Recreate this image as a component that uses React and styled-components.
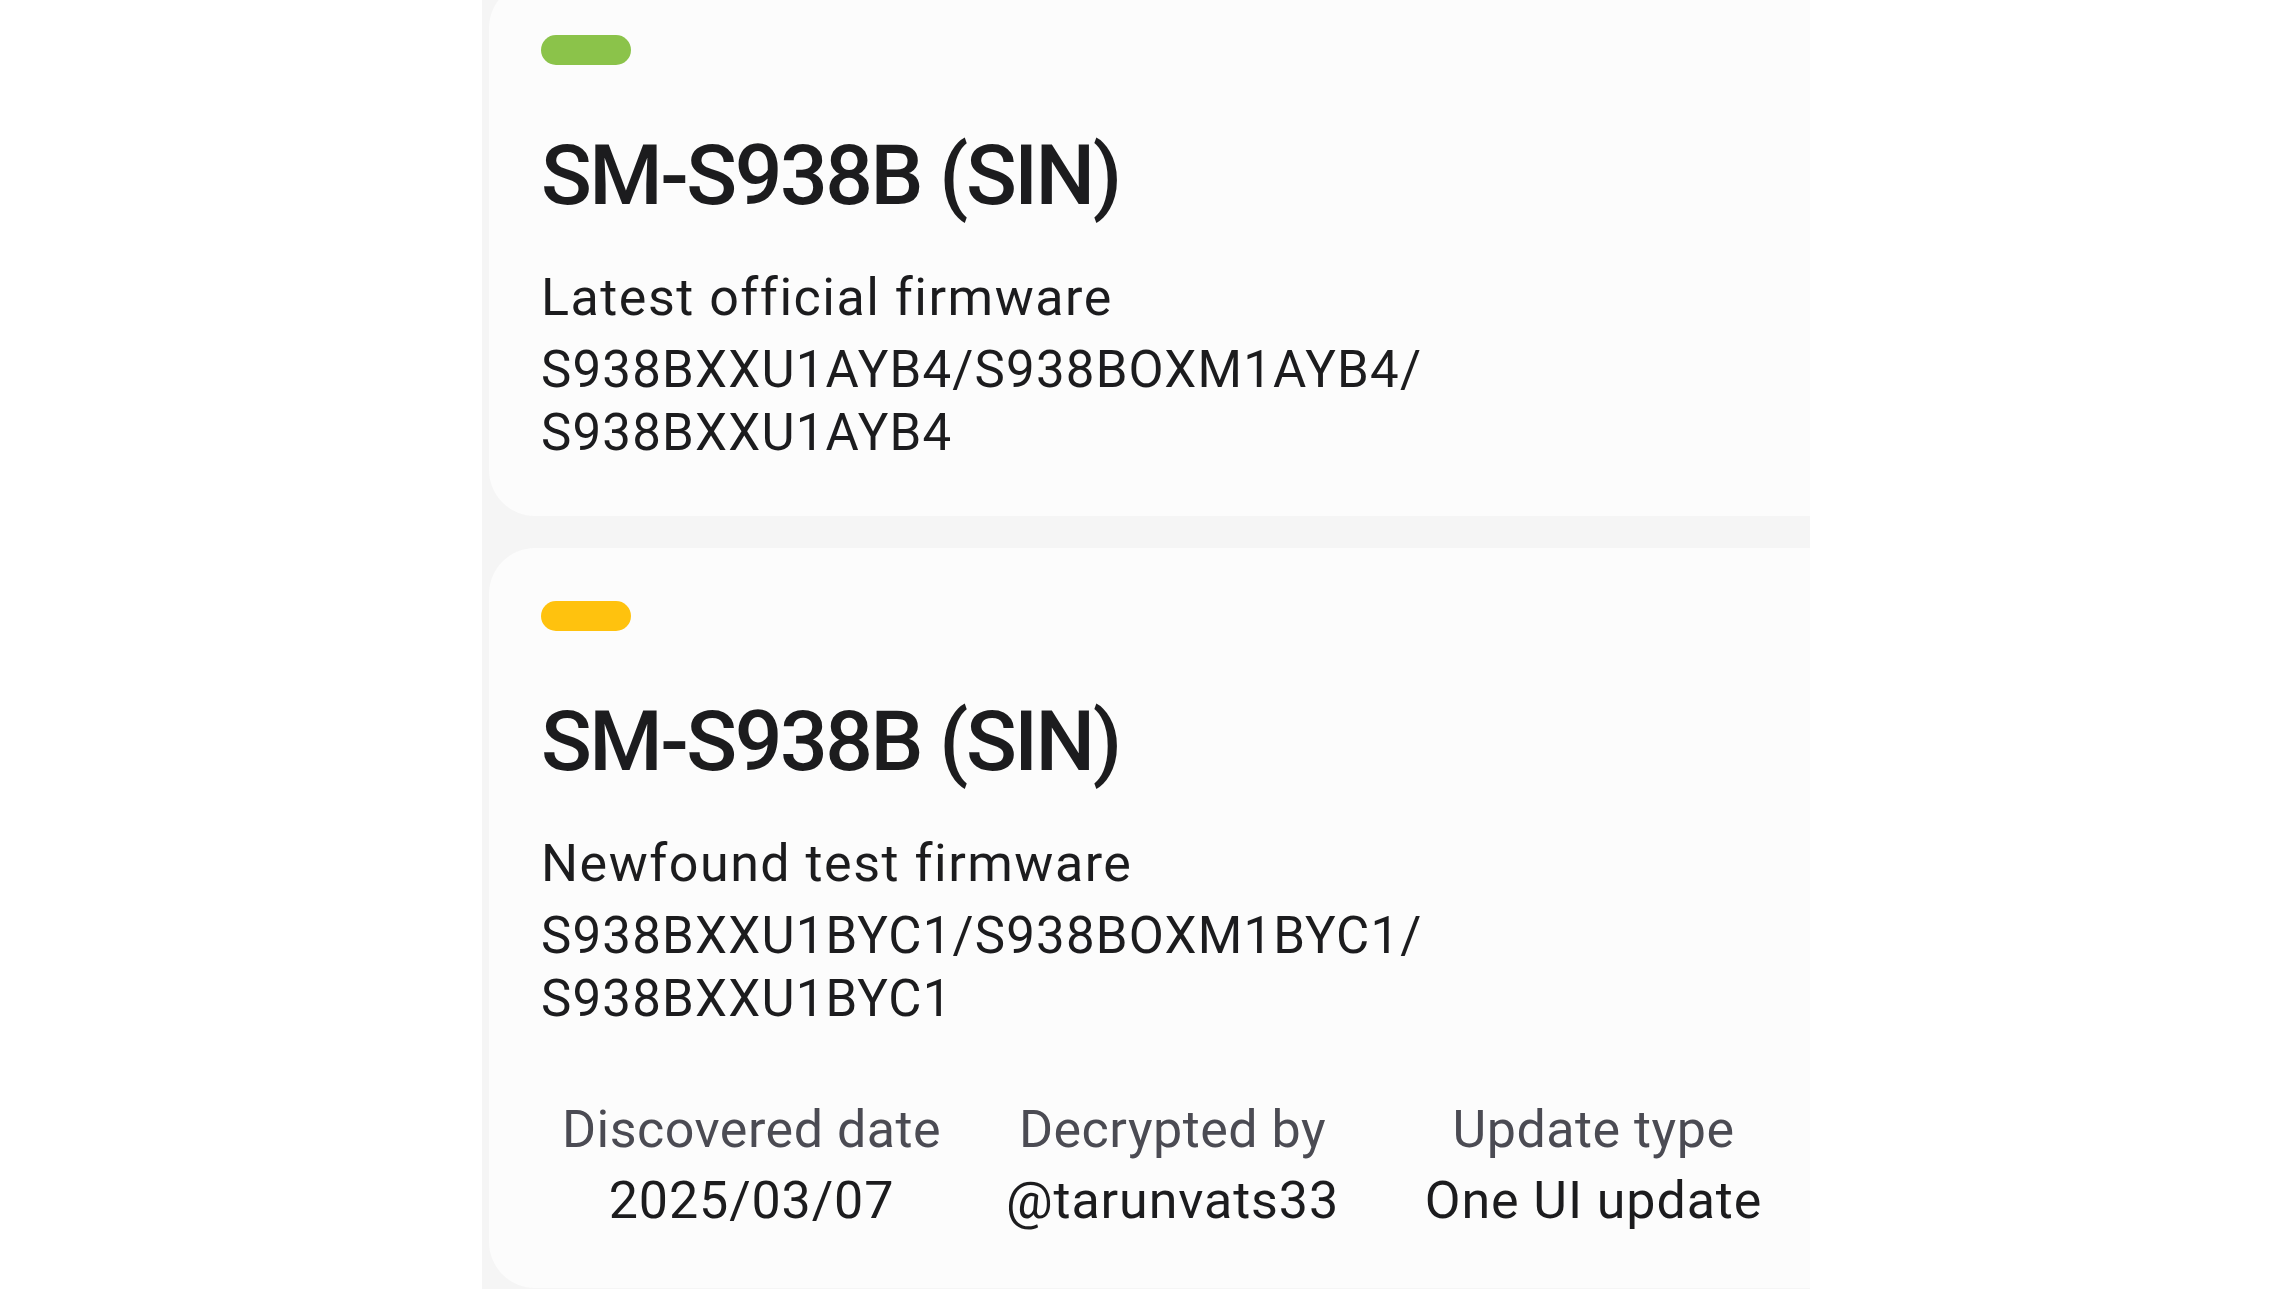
import React from 'react';
import styled, { createGlobalStyle } from 'styled-components';

const GlobalStyle = createGlobalStyle`
  html, body {
    margin: 0;
    padding: 0;
    background: #ffffff;
  }
  body {
    font-family: Roboto, "Noto Sans", "Liberation Sans", sans-serif;
    -webkit-font-smoothing: antialiased;
  }
`;

const Page = styled.div`
  display: flex;
  justify-content: flex-start;
  min-height: 100vh;
  padding-left: 482px;
`;

const Screen = styled.div`
  width: 1328px;
  height: 1289px;
  background: #f5f5f5;
  overflow: hidden;
  padding-left: 7px;
  box-sizing: border-box;
  display: flex;
  flex-direction: column;
  gap: 32px;
`;

const Card = styled.section`
  flex-shrink: 0;
  width: 1367px;
  box-sizing: border-box;
  background: #fcfcfc;
  border-radius: 46px;
  padding: 53px 52px 52px;
  color: #1c1c1e;

  &:first-child {
    margin-top: -18px;
  }
`;

const Pill = styled.div`
  width: 90px;
  height: 30px;
  border-radius: 15px;
  background: ${(p) => p.$color};
`;

const Model = styled.h2`
  margin: 61px 0 0;
  font-size: 84px;
  line-height: 1.2;
  font-weight: 500;
  letter-spacing: -2.5px;
  color: #1c1c1e;
`;

const Kind = styled.div`
  margin-top: 40px;
  font-size: 52px;
  line-height: 1.2;
  font-weight: 400;
  letter-spacing: 1.5px;
  color: #1c1c1e;
`;

const Code = styled.div`
  margin-top: 9px;
  font-size: 51px;
  line-height: 63px;
  letter-spacing: 1.2px;
  color: #1c1c1e;
`;

const InfoRow = styled.div`
  margin-top: 64px;
  display: grid;
  grid-template-columns: repeat(3, 1fr);
`;

const InfoCell = styled.div`
  display: flex;
  flex-direction: column;
  align-items: center;
  text-align: center;
  font-size: 52px;
  line-height: 71px;
  letter-spacing: 0.5px;
`;

const Label = styled.span`
  color: #4b4b53;
`;

const Value = styled.span`
  color: #1c1c1e;
  letter-spacing: 0.9px;
`;

const firmware = [
  {
    color: '#8bc34a',
    model: 'SM-S938B (SIN)',
    kind: 'Latest official firmware',
    code: ['S938BXXU1AYB4/S938BOXM1AYB4/', 'S938BXXU1AYB4'],
  },
  {
    color: '#ffc20e',
    model: 'SM-S938B (SIN)',
    kind: 'Newfound test firmware',
    code: ['S938BXXU1BYC1/S938BOXM1BYC1/', 'S938BXXU1BYC1'],
    info: [
      ['Discovered date', '2025/03/07'],
      ['Decrypted by', '@tarunvats33'],
      ['Update type', 'One UI update'],
    ],
  },
];

export default function App() {
  return (
    <>
      <GlobalStyle />
      <Page>
        <Screen>
          {firmware.map((fw, i) => (
            <Card key={i}>
              <Pill $color={fw.color} />
              <Model>{fw.model}</Model>
              <Kind>{fw.kind}</Kind>
              <Code>
                {fw.code.map((line) => (
                  <div key={line}>{line}</div>
                ))}
              </Code>
              {fw.info && (
                <InfoRow>
                  {fw.info.map(([label, value]) => (
                    <InfoCell key={label}>
                      <Label>{label}</Label>
                      <Value>{value}</Value>
                    </InfoCell>
                  ))}
                </InfoRow>
              )}
            </Card>
          ))}
        </Screen>
      </Page>
    </>
  );
}
